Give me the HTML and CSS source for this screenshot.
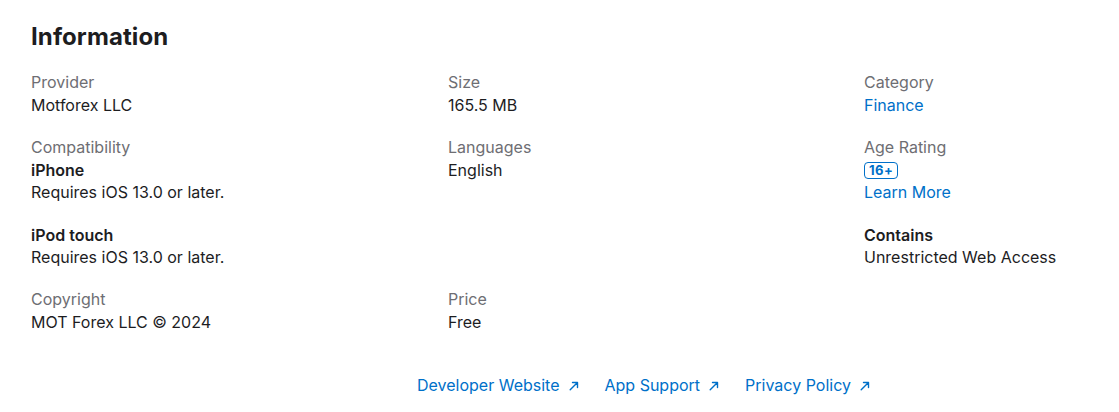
FILE: index.html
```html
<!DOCTYPE html>
<html lang="en">
<head>
<meta charset="utf-8">
<title>Information</title>
<link rel="stylesheet" href="styles.css">
</head>
<body>
<section class="info">
  <h2 class="title">Information</h2>
  <dl class="grid">
    <div class="item">
      <dt class="label">Provider</dt>
      <dd class="value">Motforex LLC</dd>
    </div>
    <div class="item">
      <dt class="label">Size</dt>
      <dd class="value">165.5 MB</dd>
    </div>
    <div class="item">
      <dt class="label">Category</dt>
      <dd class="value"><a class="link" href="#">Finance</a></dd>
    </div>

    <div class="item">
      <dt class="label">Compatibility</dt>
      <dd class="value">
        <div class="sub">
          <div class="strong">iPhone</div>
          <div>Requires iOS 13.0 or later.</div>
        </div>
        <div class="sub">
          <div class="strong">iPod touch</div>
          <div>Requires iOS 13.0 or later.</div>
        </div>
      </dd>
    </div>
    <div class="item">
      <dt class="label">Languages</dt>
      <dd class="value">English</dd>
    </div>
    <div class="item">
      <dt class="label">Age Rating</dt>
      <dd class="value">
        <div class="sub">
          <div><span class="badge">16+</span></div>
          <div><a class="link" href="#">Learn More</a></div>
        </div>
        <div class="sub">
          <div class="strong">Contains</div>
          <div>Unrestricted Web Access</div>
        </div>
      </dd>
    </div>

    <div class="item">
      <dt class="label">Copyright</dt>
      <dd class="value">MOT Forex LLC © 2024</dd>
    </div>
    <div class="item">
      <dt class="label">Price</dt>
      <dd class="value">Free</dd>
    </div>
  </dl>
  <ul class="links">
    <li><a class="link ext" href="#">Developer Website <svg class="arrow" viewBox="0 0 10 10" width="10" height="10" aria-hidden="true"><path d="M1.2 8.8 L8.5 1.5 M3.5 1.5 H8.5 V6.5" fill="none" stroke="currentColor" stroke-width="1.4" stroke-linecap="round" stroke-linejoin="round"/></svg></a></li>
    <li><a class="link ext" href="#">App Support <svg class="arrow" viewBox="0 0 10 10" width="10" height="10" aria-hidden="true"><path d="M1.2 8.8 L8.5 1.5 M3.5 1.5 H8.5 V6.5" fill="none" stroke="currentColor" stroke-width="1.4" stroke-linecap="round" stroke-linejoin="round"/></svg></a></li>
    <li><a class="link ext" href="#">Privacy Policy <svg class="arrow" viewBox="0 0 10 10" width="10" height="10" aria-hidden="true"><path d="M1.2 8.8 L8.5 1.5 M3.5 1.5 H8.5 V6.5" fill="none" stroke="currentColor" stroke-width="1.4" stroke-linecap="round" stroke-linejoin="round"/></svg></a></li>
  </ul>
</section>
</body>
</html>
```

FILE: styles.css
```css
html, body {
  margin: 0;
  padding: 0;
  background: #ffffff;
}

body {
  font-family: Inter, "Liberation Sans", Arial, sans-serif;
  font-size: 16px;
  line-height: 22px;
  color: #1d1d1f;
  -webkit-font-smoothing: antialiased;
}

.info {
  padding: 21px 31px 0 31px;
}

.title {
  margin: 0 0 18px 0;
  font-size: 24px;
  line-height: 32px;
  font-weight: 700;
  letter-spacing: 0.1px;
  color: #1d1d1f;
}

.grid {
  display: grid;
  grid-template-columns: 397px 396px 240px;
  column-gap: 20px;
  row-gap: 20px;
  margin: 0;
}

.item {
  display: flex;
  flex-direction: column;
}

.label {
  color: #6e6e73;
  margin: 0 0 1px 0;
}

.value {
  margin: 0;
  display: flex;
  flex-direction: column;
  gap: 21px;
}

.strong {
  font-weight: 600;
}

.link {
  color: #0070c9;
  text-decoration: none;
}

.badge {
  display: inline-block;
  border: 1px solid #0070c9;
  border-radius: 4px;
  color: #0070c9;
  font-size: 13px;
  font-weight: 700;
  line-height: 15px;
  padding: 0 4px;
  letter-spacing: 0.5px;
  vertical-align: 1px;
}

.links {
  list-style: none;
  margin: 41px 0 0 386px;
  padding: 0;
  display: flex;
  gap: 26px;
}

.ext {
  display: inline-flex;
  align-items: center;
  gap: 9px;
}

.arrow {
  display: block;
  margin-top: 2px;
}
```
